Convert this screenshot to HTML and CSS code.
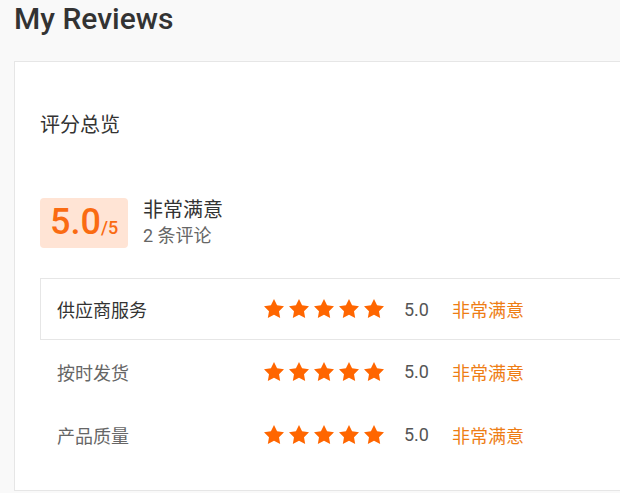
FILE: index.html
```html
<!DOCTYPE html>
<html lang="zh">
<head>
<meta charset="utf-8">
<title>My Reviews</title>
<link rel="stylesheet" href="styles.css">
</head>
<body>
<div class="page">
  <h1 class="page-title">My Reviews</h1>
  <section class="card">
    <h2 class="card-title">评分总览</h2>
    <div class="summary">
      <div class="score-box"><span class="score-big">5.0</span><span class="score-max">/5</span></div>
      <div class="summary-text">
        <div class="summary-level">非常满意</div>
        <div class="summary-count">2 条评论</div>
      </div>
    </div>
    <div class="rating-table">
      <div class="rating-row active">
        <div class="rating-label">供应商服务</div>
        <div class="stars">
          <svg class="star" viewBox="0 0 24 24"><path d="M12 2l3.09 6.26L22 9.27l-5 4.87 1.18 6.88L12 17.77l-6.18 3.25L7 14.14 2 9.27l6.91-1.01L12 2z"/></svg>
          <svg class="star" viewBox="0 0 24 24"><path d="M12 2l3.09 6.26L22 9.27l-5 4.87 1.18 6.88L12 17.77l-6.18 3.25L7 14.14 2 9.27l6.91-1.01L12 2z"/></svg>
          <svg class="star" viewBox="0 0 24 24"><path d="M12 2l3.09 6.26L22 9.27l-5 4.87 1.18 6.88L12 17.77l-6.18 3.25L7 14.14 2 9.27l6.91-1.01L12 2z"/></svg>
          <svg class="star" viewBox="0 0 24 24"><path d="M12 2l3.09 6.26L22 9.27l-5 4.87 1.18 6.88L12 17.77l-6.18 3.25L7 14.14 2 9.27l6.91-1.01L12 2z"/></svg>
          <svg class="star" viewBox="0 0 24 24"><path d="M12 2l3.09 6.26L22 9.27l-5 4.87 1.18 6.88L12 17.77l-6.18 3.25L7 14.14 2 9.27l6.91-1.01L12 2z"/></svg>
        </div>
        <div class="rating-score">5.0</div>
        <div class="rating-level">非常满意</div>
      </div>
      <div class="rating-row">
        <div class="rating-label">按时发货</div>
        <div class="stars">
          <svg class="star" viewBox="0 0 24 24"><path d="M12 2l3.09 6.26L22 9.27l-5 4.87 1.18 6.88L12 17.77l-6.18 3.25L7 14.14 2 9.27l6.91-1.01L12 2z"/></svg>
          <svg class="star" viewBox="0 0 24 24"><path d="M12 2l3.09 6.26L22 9.27l-5 4.87 1.18 6.88L12 17.77l-6.18 3.25L7 14.14 2 9.27l6.91-1.01L12 2z"/></svg>
          <svg class="star" viewBox="0 0 24 24"><path d="M12 2l3.09 6.26L22 9.27l-5 4.87 1.18 6.88L12 17.77l-6.18 3.25L7 14.14 2 9.27l6.91-1.01L12 2z"/></svg>
          <svg class="star" viewBox="0 0 24 24"><path d="M12 2l3.09 6.26L22 9.27l-5 4.87 1.18 6.88L12 17.77l-6.18 3.25L7 14.14 2 9.27l6.91-1.01L12 2z"/></svg>
          <svg class="star" viewBox="0 0 24 24"><path d="M12 2l3.09 6.26L22 9.27l-5 4.87 1.18 6.88L12 17.77l-6.18 3.25L7 14.14 2 9.27l6.91-1.01L12 2z"/></svg>
        </div>
        <div class="rating-score">5.0</div>
        <div class="rating-level">非常满意</div>
      </div>
      <div class="rating-row">
        <div class="rating-label">产品质量</div>
        <div class="stars">
          <svg class="star" viewBox="0 0 24 24"><path d="M12 2l3.09 6.26L22 9.27l-5 4.87 1.18 6.88L12 17.77l-6.18 3.25L7 14.14 2 9.27l6.91-1.01L12 2z"/></svg>
          <svg class="star" viewBox="0 0 24 24"><path d="M12 2l3.09 6.26L22 9.27l-5 4.87 1.18 6.88L12 17.77l-6.18 3.25L7 14.14 2 9.27l6.91-1.01L12 2z"/></svg>
          <svg class="star" viewBox="0 0 24 24"><path d="M12 2l3.09 6.26L22 9.27l-5 4.87 1.18 6.88L12 17.77l-6.18 3.25L7 14.14 2 9.27l6.91-1.01L12 2z"/></svg>
          <svg class="star" viewBox="0 0 24 24"><path d="M12 2l3.09 6.26L22 9.27l-5 4.87 1.18 6.88L12 17.77l-6.18 3.25L7 14.14 2 9.27l6.91-1.01L12 2z"/></svg>
          <svg class="star" viewBox="0 0 24 24"><path d="M12 2l3.09 6.26L22 9.27l-5 4.87 1.18 6.88L12 17.77l-6.18 3.25L7 14.14 2 9.27l6.91-1.01L12 2z"/></svg>
        </div>
        <div class="rating-score">5.0</div>
        <div class="rating-level">非常满意</div>
      </div>
    </div>
  </section>
</div>
</body>
</html>
```

FILE: styles.css
```css
html, body {
  margin: 0;
  padding: 0;
}
body {
  background: #f9f9f9;
  font-family: Roboto, "Noto Sans CJK SC", sans-serif;
  color: #333;
  overflow: hidden;
  width: 620px;
  height: 493px;
}
.page {
  padding-left: 14px;
  overflow: hidden;
}
.page-title {
  margin: 1px 0 0 0;
  font-size: 30px;
  line-height: 36px;
  font-weight: 500;
  color: #333;
}
.card {
  margin-top: 24px;
  width: 680px;
  background: #fff;
  border: 1px solid #e6e6e6;
  padding: 50px 0 24px 25px;
}
.card-title {
  margin: 0;
  font-size: 20px;
  line-height: 26px;
  font-weight: 400;
  color: #333;
}
.summary {
  display: flex;
  align-items: flex-start;
  gap: 15px;
  height: 50px;
  margin-top: 60px;
}
.score-box {
  width: 88px;
  height: 50px;
  box-sizing: border-box;
  padding-left: 10px;
  border-radius: 4px;
  background: #ffe4d5;
  color: #fa6b12;
  display: flex;
  align-items: baseline;
  line-height: 48px;
}
.score-big {
  font-size: 36px;
  font-weight: 500;
}
.score-max {
  font-size: 18px;
  font-weight: 500;
}
.summary-text {
  margin-top: -1px;
}
.summary-level {
  font-size: 20px;
  line-height: 26px;
  color: #333;
}
.summary-count {
  font-size: 18px;
  line-height: 26px;
  color: #666;
}
.rating-table {
  margin-top: 30px;
}
.rating-row {
  display: flex;
  align-items: center;
  height: 63px;
  box-sizing: border-box;
  border-left: 1px solid transparent;
  font-size: 18px;
}
.rating-row.active {
  height: 62px;
  border: 1px solid #e6e6e6;
}
.rating-label {
  width: 221px;
  padding-left: 16px;
  box-sizing: border-box;
  color: #666;
}
.rating-row.active .rating-label {
  color: #333;
}
.stars {
  display: flex;
  gap: 1px;
}
.star {
  width: 24px;
  height: 24px;
  fill: #ff6600;
  display: block;
}
.rating-score {
  margin-left: 18px;
  width: 48px;
  color: #555;
}
.rating-level {
  color: #ee7d14;
}
```
